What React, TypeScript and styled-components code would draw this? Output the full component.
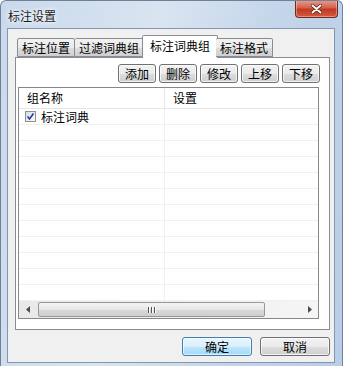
import styled, { createGlobalStyle } from "styled-components";

const GlobalStyle = createGlobalStyle`
  html, body {
    margin: 0;
    padding: 0;
    background: #fff;
  }
  body {
    font-family: "Noto Sans CJK SC", "Microsoft YaHei", sans-serif;
    font-size: 12px;
    color: #000;
  }
`;

const Window = styled.div`
  width: 343px;
  height: 366px;
  display: flex;
  flex-direction: column;
  box-sizing: border-box;
  border-radius: 6px 6px 0 0;
  border: 1px solid #6f8099;
  border-bottom: none;
  background: linear-gradient(100deg, #c9d9ec 0%, #d9e4f0 40%, #c4d5ea 70%, #b9cde6 100%);
  overflow: hidden;
`;

const TitleBar = styled.div`
  height: 27px;
  display: flex;
  align-items: flex-start;
  justify-content: space-between;
`;

const Title = styled.span`
  margin: 6px 0 0 7px;
  font-size: 12px;
  color: #1a1a1a;
  text-shadow: 0 0 6px #fff, 0 0 3px #fff;
`;

const CloseButton = styled.div`
  width: 43px;
  height: 18px;
  margin: -1px 4px 0 0;
  box-sizing: border-box;
  border: 1px solid #6d2a22;
  border-top: none;
  border-radius: 0 0 4px 4px;
  background: linear-gradient(#e7a090 0%, #d6614b 45%, #c03a22 55%, #d55a3e 100%);
  box-shadow: inset 0 0 0 1px rgba(255, 255, 255, 0.35);
  display: flex;
  align-items: center;
  justify-content: center;
`;

const Client = styled.div`
  flex: 1;
  margin: 0 7px 3px 6px;
  box-sizing: border-box;
  border: 1px solid #8496ad;
  background: #f0f0f0;
  display: flex;
  flex-direction: column;
  padding: 5px 4px 0 7px;
`;

const TabStrip = styled.div`
  display: flex;
  align-items: flex-end;
  height: 23px;
  padding-left: 2px;
  position: relative;
  z-index: 1;
`;

const Tab = styled.div<{ $active?: boolean }>`
  box-sizing: border-box;
  height: ${(p) => (p.$active ? "23px" : "19px")};
  margin: ${(p) => (p.$active ? "0 -2px -1px -2px" : "0")};
  padding: ${(p) => (p.$active ? "2px 7px 0" : "1px 4px 0")};
  border: 1px solid #898c95;
  border-bottom: ${(p) => (p.$active ? "none" : "1px solid #898c95")};
  border-left-width: ${(p) => (p.$active ? "1px" : "0")};
  border-radius: 2px 2px 0 0;
  background: ${(p) =>
    p.$active ? "#fff" : "linear-gradient(#f2f2f2 0%, #ebebeb 50%, #dddddd 51%, #cfcfcf 100%)"};
  font-size: 12px;
  line-height: 16px;
  white-space: nowrap;
  &:first-child {
    border-left-width: 1px;
  }
`;

const Panel = styled.div`
  box-sizing: border-box;
  width: 315px;
  height: 273px;
  border: 1px solid #898c95;
  background: #fff;
  display: flex;
  flex-direction: column;
  padding: 6px 9px 0 2px;
`;

const ButtonRow = styled.div`
  display: flex;
  justify-content: flex-end;
  gap: 3px;
  margin-bottom: 4px;
`;

const SmallButton = styled.button`
  box-sizing: border-box;
  width: 38px;
  height: 19px;
  padding: 0;
  border: 1px solid #707070;
  border-radius: 3px;
  background: linear-gradient(#f2f2f2 0%, #ebebeb 50%, #dddddd 51%, #cfcfcf 100%);
  box-shadow: inset 0 0 0 1px rgba(255, 255, 255, 0.7);
  font-family: inherit;
  font-size: 12px;
  line-height: 16px;
  color: #000;
`;

const List = styled.div`
  box-sizing: border-box;
  width: 301px;
  height: 232px;
  border: 1px solid #828790;
  background: #fff;
  display: flex;
  flex-direction: column;
`;

const Grid = styled.div`
  flex: 1;
  display: grid;
  grid-template-columns: 146px 1fr;
  grid-auto-rows: 16px;
  grid-template-rows: 21px;
  overflow: hidden;
`;

const HeaderCell = styled.div<{ $last?: boolean }>`
  box-sizing: border-box;
  border-bottom: 1px solid #e5e5e5;
  border-right: ${(p) => (p.$last ? "none" : "1px solid #e5e5e5")};
  padding: 2px 0 0 8px;
  line-height: 16px;
  font-size: 12px;
`;

const Cell = styled.div<{ $last?: boolean }>`
  box-sizing: border-box;
  border-bottom: 1px solid #f0f0f0;
  border-right: ${(p) => (p.$last ? "none" : "1px solid #f0f0f0")};
  padding-left: 6px;
  display: flex;
  align-items: center;
  gap: 5px;
  font-size: 12px;
  line-height: 15px;
`;

const Check = styled.span`
  box-sizing: border-box;
  width: 11px;
  height: 11px;
  border: 1px solid #8f8f8f;
  background: linear-gradient(135deg, #d5dbe6, #fbfbfb);
  display: inline-flex;
  align-items: center;
  justify-content: center;
`;

const ScrollBar = styled.div`
  height: 17px;
  display: flex;
  align-items: center;
  background: linear-gradient(90deg, #e9e9e9, #f5f5f5);
  border-top: 1px solid #f0f0f0;
`;

const ArrowBox = styled.div`
  width: 17px;
  height: 17px;
  display: flex;
  align-items: center;
  justify-content: center;
`;

const Thumb = styled.div`
  box-sizing: border-box;
  width: 227px;
  height: 15px;
  margin-left: 2px;
  border: 1px solid #979797;
  border-radius: 2px;
  background: linear-gradient(#f3f3f3 0%, #e8e8e8 50%, #d9d9d9 51%, #cfcfcf 100%);
  display: flex;
  align-items: center;
  justify-content: center;
  gap: 1px;
`;

const Grip = styled.span`
  width: 1px;
  height: 6px;
  background: #555;
  border-right: 1px solid #fff;
`;

const Spacer = styled.div`
  flex: 1;
`;

const Footer = styled.div`
  display: flex;
  justify-content: flex-end;
  gap: 8px;
  padding: 7px 0 0 0;
`;

const DialogButton = styled.button<{ $primary?: boolean }>`
  box-sizing: border-box;
  width: 70px;
  height: 19px;
  padding: 0;
  border: 1px solid ${(p) => (p.$primary ? "#3c7fb1" : "#707070")};
  border-radius: 3px;
  background: ${(p) =>
    p.$primary
      ? "linear-gradient(#eaf6fd 0%, #d9f0fc 50%, #bee6fd 51%, #a7d9f5 100%)"
      : "linear-gradient(#f2f2f2 0%, #ebebeb 50%, #dddddd 51%, #cfcfcf 100%)"};
  box-shadow: inset 0 0 0 1px ${(p) => (p.$primary ? "rgba(255,255,255,0.6)" : "rgba(255,255,255,0.7)")};
  font-family: inherit;
  font-size: 12px;
  line-height: 16px;
  color: #000;
`;

const tabs = ["标注位置", "过滤词典组", "标注词典组", "标注格式"];
const actions = ["添加", "删除", "修改", "上移", "下移"];
const emptyRows = Array.from({ length: 11 });

export default function App() {
  return (
    <>
      <GlobalStyle />
      <Window>
        <TitleBar>
          <Title>标注设置</Title>
          <CloseButton>
            <svg width="11" height="10" viewBox="0 0 11 10">
              <path
                d="M1.5 1.5 L9.5 8.5 M9.5 1.5 L1.5 8.5"
                stroke="#4a1a12"
                strokeWidth="3.4"
                strokeLinecap="round"
              />
              <path
                d="M1.5 1.5 L9.5 8.5 M9.5 1.5 L1.5 8.5"
                stroke="#fff"
                strokeWidth="2"
                strokeLinecap="round"
              />
            </svg>
          </CloseButton>
        </TitleBar>
        <Client>
          <TabStrip>
            {tabs.map((t, i) => (
              <Tab key={t} $active={i === 2}>
                {t}
              </Tab>
            ))}
          </TabStrip>
          <Panel>
            <ButtonRow>
              {actions.map((a) => (
                <SmallButton key={a}>{a}</SmallButton>
              ))}
            </ButtonRow>
            <List>
              <Grid>
                <HeaderCell>组名称</HeaderCell>
                <HeaderCell $last>设置</HeaderCell>
                <Cell>
                  <Check>
                    <svg width="9" height="9" viewBox="0 0 9 9">
                      <path
                        d="M1.5 4.5 L3.5 7 L7.5 1.5"
                        stroke="#2a3c8e"
                        strokeWidth="1.6"
                        fill="none"
                      />
                    </svg>
                  </Check>
                  标注词典
                </Cell>
                <Cell $last />
                {emptyRows.map((_, i) => [
                  <Cell key={`a${i}`} />,
                  <Cell key={`b${i}`} $last />,
                ])}
              </Grid>
              <ScrollBar>
                <ArrowBox>
                  <svg width="4" height="7" viewBox="0 0 4 7">
                    <path d="M4 0 L0 3.5 L4 7 Z" fill="#4d4d4d" />
                  </svg>
                </ArrowBox>
                <Thumb>
                  <Grip />
                  <Grip />
                  <Grip />
                </Thumb>
                <Spacer />
                <ArrowBox>
                  <svg width="4" height="7" viewBox="0 0 4 7">
                    <path d="M0 0 L4 3.5 L0 7 Z" fill="#4d4d4d" />
                  </svg>
                </ArrowBox>
              </ScrollBar>
            </List>
          </Panel>
          <Footer>
            <DialogButton $primary>确定</DialogButton>
            <DialogButton>取消</DialogButton>
          </Footer>
        </Client>
      </Window>
    </>
  );
}
